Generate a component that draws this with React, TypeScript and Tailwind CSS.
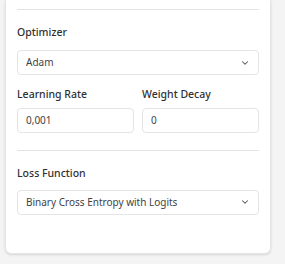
import { ChevronDown } from "lucide-react";

const font = { fontFamily: '"Noto Sans", "Open Sans", sans-serif' };

const Label = ({ children, className = "" }: { children: React.ReactNode; className?: string }) => (
  <p className={`text-[10.5px] leading-[14px] font-medium text-[#303033] ${className}`}>{children}</p>
);

const SelectBox = ({ value, className = "" }: { value: string; className?: string }) => (
  <div
    className={`flex items-center justify-between h-[25px] pl-2 pr-2 rounded-[4px] border border-[#e4e4e7] bg-white ${className}`}
  >
    <span className="text-[10px] text-[#3f3f46]">{value}</span>
    <ChevronDown size={10} strokeWidth={2.5} className="text-[#52525b]" />
  </div>
);

const NumberInput = ({ value }: { value: string }) => (
  <input
    readOnly
    defaultValue={value}
    className="w-full h-[25px] px-2 rounded-[4px] border border-[#e4e4e7] bg-white text-[10px] text-[#3f3f46] outline-none"
  />
);

export default function App() {
  return (
    <div className="min-h-screen bg-[#f4f4f5] pl-[5px] pr-[14px]" style={font}>
      <div className="w-[266px] bg-white border border-t-0 border-[#e4e4e7] rounded-b-md shadow-sm px-[11px] pt-[9px] pb-[38px]">
        {/* Optimizer */}
        <div className="h-px bg-[#e4e4e7]" />
        <Label className="mt-[15px]">Optimizer</Label>
        <SelectBox value="Adam" className="mt-[11px]" />

        {/* Rates */}
        <div className="grid grid-cols-2 gap-2 mt-[12px]">
          <div>
            <Label>Learning Rate</Label>
            <div className="mt-[5px]">
              <NumberInput value="0,001" />
            </div>
          </div>
          <div>
            <Label>Weight Decay</Label>
            <div className="mt-[5px]">
              <NumberInput value="0" />
            </div>
          </div>
        </div>

        {/* Loss */}
        <div className="h-px bg-[#e4e4e7] mt-[17px]" />
        <Label className="mt-[15px]">Loss Function</Label>
        <SelectBox value="Binary Cross Entropy with Logits" className="mt-[10px]" />
      </div>
    </div>
  );
}
